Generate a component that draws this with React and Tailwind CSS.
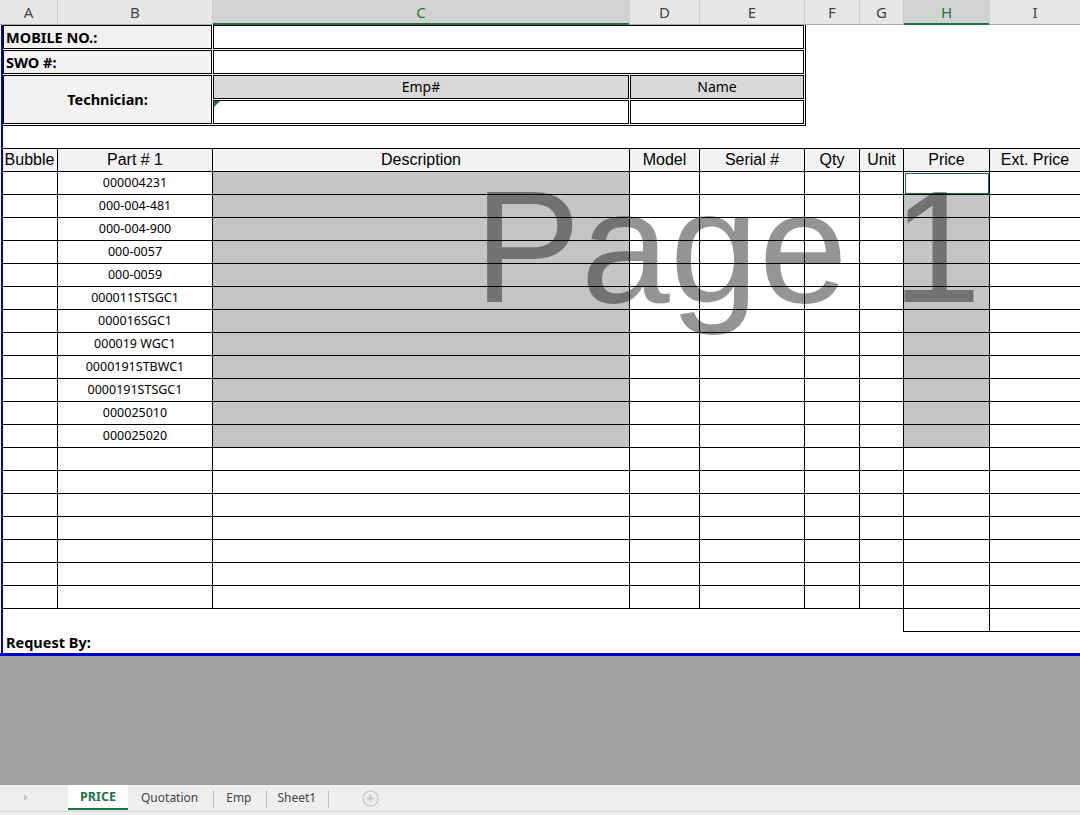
import React from "react";

const COLS = "grid grid-cols-[56px_155px_417px_70px_105px_55px_44px_86px_91px]";
const HCOLS = "grid grid-cols-[58px_155px_417px_70px_105px_55px_44px_86px_91px]";

const parts = [
  "000004231",
  "000-004-481",
  "000-004-900",
  "000-0057",
  "000-0059",
  "000011STSGC1",
  "000016SGC1",
  "000019 WGC1",
  "0000191STBWC1",
  "0000191STSGC1",
  "000025010",
  "000025020",
];

function ColHeader() {
  const cols = ["A", "B", "C", "D", "E", "F", "G", "H", "I"];
  const sel = { C: true, H: true };
  return (
    <div className={`${HCOLS} h-[25px] bg-[#e6e6e6] border-b border-[#a8a8a8]`}>
      {cols.map((c) => (
        <div
          key={c}
          className={`relative flex items-center justify-center border-r border-[#cdcdcd] text-[15px] font-['Noto_Sans',sans-serif] ${
            sel[c] ? "bg-[#d2d2d2] text-[#217346]" : "text-[#444444]"
          }`}
        >
          {c}
          {sel[c] && <div className="absolute left-0 right-0 -bottom-px h-[2px] bg-[#217346]" />}
        </div>
      ))}
    </div>
  );
}

function Form() {
  const label = "border border-black bg-[#f2f2f2] font-bold text-[14.5px] leading-[22px] pl-[2px] text-black";
  return (
    <div className="ml-px w-[805px] border-x border-b border-black px-px pb-px bg-white font-['Noto_Sans',sans-serif]">
      <div className="grid grid-cols-[209px_416px_174px] grid-rows-[24px_24px_24px_24px] gap-px">
        <div className={label}>MOBILE NO.:</div>
        <div className="col-span-2 border border-black bg-white" />
        <div className={label}>SWO #:</div>
        <div className="col-span-2 border border-black bg-white" />
        <div className="row-span-2 border border-black bg-[#f2f2f2] flex items-center justify-center font-bold text-[14.5px] text-black">
          Technician:
        </div>
        <div className="border border-black bg-[#d9d9d9] text-center text-[14px] leading-[22px] text-black">Emp#</div>
        <div className="border border-black bg-[#d9d9d9] text-center text-[14px] leading-[22px] text-black">Name</div>
        <div className="relative border border-black bg-white">
          <div className="absolute left-0 top-0 w-0 h-0 border-t-[6px] border-r-[6px] border-t-[#1d7b24] border-r-transparent" />
        </div>
        <div className="border border-black bg-white" />
      </div>
    </div>
  );
}

function Table() {
  const heads = ["Bubble", "Part # 1", "Description", "Model", "Serial #", "Qty", "Unit", "Price", "Ext. Price"];
  const rows = Array.from({ length: 19 }, (_, i) => i);
  const cell = "h-[23px] border-r border-b border-black";
  return (
    <div className="ml-[2px] w-[1079px] border-t border-black">
      <div className={`${COLS}`}>
        {heads.map((h) => (
          <div
            key={h}
            className={`${cell} bg-[#f2f2f2] flex items-center justify-center text-[16px] leading-[22px] font-['Liberation_Sans',Arial,sans-serif] text-black whitespace-nowrap overflow-hidden`}
          >
            {h}
          </div>
        ))}
      </div>
      {rows.map((i) => (
        <div key={i} className={COLS}>
          <div className={`${cell} bg-white`} />
          <div className={`${cell} bg-white flex items-center justify-center text-[12.5px] leading-[22px] font-['Noto_Sans',sans-serif] text-black whitespace-nowrap`}>
            {parts[i] || ""}
          </div>
          <div className={`${cell} ${i < 12 ? "bg-[#c4c4c4]" : "bg-white"}`} />
          <div className={`${cell} bg-white`} />
          <div className={`${cell} bg-white`} />
          <div className={`${cell} bg-white`} />
          <div className={`${cell} bg-white`} />
          <div className={`${cell} ${i >= 1 && i < 12 ? "bg-[#c4c4c4]" : "bg-white"}`}>
            {i === 0 && <div className="ml-px mt-px h-[21px] w-[84px] border border-[#217346]" />}
          </div>
          <div className={`${cell} bg-white`} />
        </div>
      ))}
      <div className={COLS}>
        <div className="h-[23px]" />
        <div className="h-[23px]" />
        <div className="h-[23px]" />
        <div className="h-[23px]" />
        <div className="h-[23px]" />
        <div className="h-[23px]" />
        <div className="h-[23px] border-r border-black" />
        <div className={cell} />
        <div className={cell} />
      </div>
    </div>
  );
}

function TabBar() {
  return (
    <div className="h-[30px] bg-[#eeeeee] font-['Noto_Sans',sans-serif]">
      <div className="flex h-[27px] items-start border-b border-[#d2d2d2]">
        <div className="w-[68px] h-[25px] flex items-center">
          <svg width="4" height="7" viewBox="0 0 4 7" className="ml-[24px]">
            <path d="M0 0 L4 3.5 L0 7 Z" fill="#c4c4c4" />
          </svg>
        </div>
        <div className="w-[60px] h-[25px] bg-white border-b-2 border-[#217346] text-center text-[12.5px] leading-[23px] font-bold text-[#217346]">
          PRICE
        </div>
        <div className="pl-[13px] pr-[15px] h-[25px] text-[12px] leading-[25px] text-[#444444]">Quotation</div>
        <div className="mt-[5px] h-[18px] w-px bg-[#c2c2c2]" />
        <div className="pl-[12px] pr-[14px] h-[25px] text-[12px] leading-[25px] text-[#444444]">Emp</div>
        <div className="mt-[5px] h-[18px] w-px bg-[#c2c2c2]" />
        <div className="pl-[11px] pr-[12px] h-[25px] text-[12px] leading-[25px] text-[#444444]">Sheet1</div>
        <div className="mt-[5px] h-[18px] w-px bg-[#c2c2c2]" />
        <svg width="17" height="17" viewBox="0 0 17 17" className="ml-[33px] mt-[5px]">
          <circle cx="8.5" cy="8.5" r="7.5" fill="none" stroke="#c3c3c3" strokeWidth="1.2" />
          <path d="M8.5 4.5 V12.5 M4.5 8.5 H12.5" stroke="#c3c3c3" strokeWidth="1.4" />
        </svg>
      </div>
    </div>
  );
}

export default function App() {
  return (
    <div className="w-[1080px] h-[815px] overflow-hidden bg-white flex flex-col">
      <ColHeader />
      <div className="relative h-[631px] overflow-hidden bg-white">
        <Form />
        <div className="h-[22px]" />
        <Table />
        <div className="h-[24px] border-b-[3px] border-[#0000c8] pl-[6px] font-['Noto_Sans',sans-serif] font-bold text-[14.5px] leading-[21px] text-black">
          Request By:
        </div>
        <div className="pointer-events-none absolute left-[474px] top-[162px] whitespace-nowrap font-['Liberation_Sans',Arial,sans-serif] text-[160px] leading-[120px] text-[rgba(0,0,0,0.42)]">
          Page 1
        </div>
        <div className="absolute left-[1px] top-0 w-[2px] h-[631px] bg-[#0000c8]" />
      </div>
      <div className="h-[129px] bg-[#a1a1a1]" />
      <TabBar />
    </div>
  );
}
